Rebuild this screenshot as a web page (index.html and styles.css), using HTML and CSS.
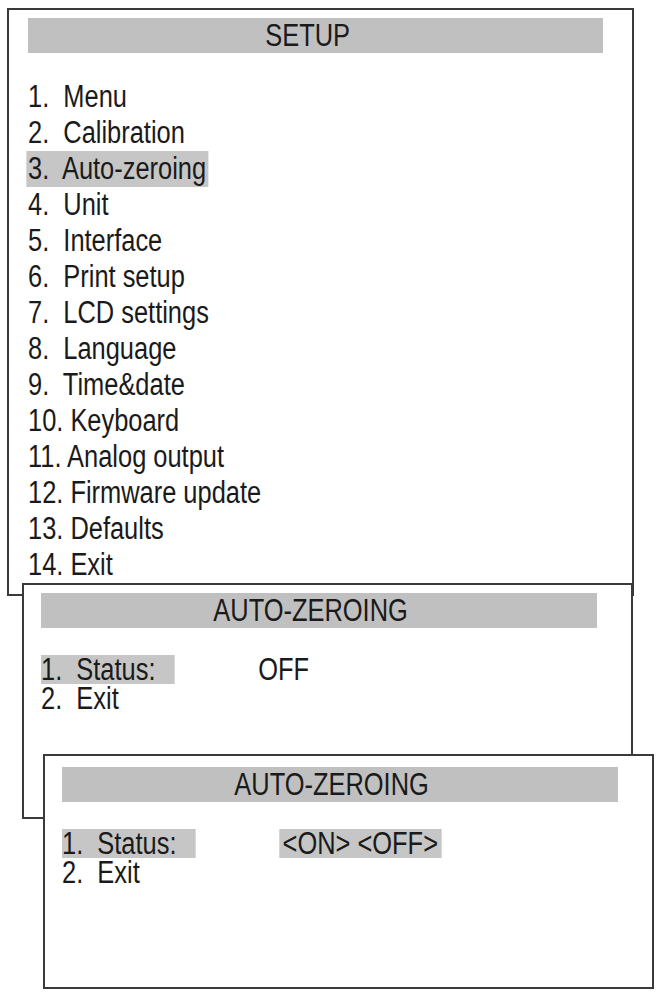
FILE: index.html
```html
<!DOCTYPE html>
<html lang="en">
<head>
<meta charset="utf-8">
<title>Setup menu – Auto-zeroing</title>
<link rel="stylesheet" href="styles.css">
</head>
<body>
<main class="stack">
  <section class="win win-setup">
    <h1 class="bar"><span class="cap">SETUP</span></h1>
    <ul class="menu">
      <li><span class="row">1.&nbsp; Menu</span></li>
      <li><span class="row">2.&nbsp; Calibration</span></li>
      <li><span class="row sel">3.&nbsp; Auto-zeroing</span></li>
      <li><span class="row">4.&nbsp; Unit</span></li>
      <li><span class="row">5.&nbsp; Interface</span></li>
      <li><span class="row">6.&nbsp; Print setup</span></li>
      <li><span class="row">7.&nbsp; LCD settings</span></li>
      <li><span class="row">8.&nbsp; Language</span></li>
      <li><span class="row">9.&nbsp; Time&amp;date</span></li>
      <li><span class="row">10. Keyboard</span></li>
      <li><span class="row">11. Analog output</span></li>
      <li><span class="row">12. Firmware update</span></li>
      <li><span class="row">13. Defaults</span></li>
      <li><span class="row">14. Exit</span></li>
    </ul>
  </section>

  <section class="win win-sub win-view">
    <h2 class="bar"><span class="cap">AUTO-ZEROING</span></h2>
    <div class="opts">
      <span class="label sel">1.&nbsp; Status:</span><span class="value">OFF</span>
      <span class="label">2.&nbsp; Exit</span><span class="value"></span>
    </div>
  </section>

  <section class="win win-sub win-edit">
    <h2 class="bar"><span class="cap">AUTO-ZEROING</span></h2>
    <div class="opts">
      <span class="label sel">1.&nbsp; Status:</span><span class="value"><span class="choice sel">&lt;ON&gt; &lt;OFF&gt;</span></span>
      <span class="label">2.&nbsp; Exit</span><span class="value"></span>
    </div>
  </section>
</main>
</body>
</html>
```

FILE: styles.css
```css
html, body {
  margin: 0;
  padding: 0;
  background: #ffffff;
}

body {
  font-family: "Liberation Sans", Arial, sans-serif;
  font-size: 31px;
  color: #1a1a1a;
}

.stack {
  display: flex;
  flex-direction: column;
  align-items: flex-start;
  padding-top: 8px;
}

/* each window paints over the one before it */
.win {
  position: relative;
  box-sizing: border-box;
  background: #ffffff;
  border: 2px solid #3a3a3a;
}

/* grey heading strip; the panel font is a narrow sans */
.bar {
  box-sizing: border-box;
  margin: 0;
  padding-right: 16px;
  background: #c0c0c0;
  font-size: 31px;
  font-weight: normal;
  text-align: center;
  line-height: 35px;
  height: 35px;
}

.cap {
  display: inline-block;
  transform: scaleX(0.82);
  transform-origin: center;
}

/* main setup window */
.win-setup {
  margin-left: 7px;
  width: 627px;
  height: 588px;
  padding: 8px 29px 0 19px;
}

.menu {
  list-style: none;
  margin: 26px 0 0;
  padding: 0;
  transform: scaleX(0.82);
  transform-origin: left top;
}

.menu li {
  height: 36px;
  line-height: 36px;
}

.row {
  display: inline-block;
  white-space: pre;
  margin-left: -2px;
  padding: 0 3px 0 2px;
}

.sel {
  background: #c6c6c6;
}

/* auto-zeroing sub windows */
.win-sub {
  width: 611px;
  padding: 8px 34px 0 17px;
}

.win-view {
  margin-left: 22px;
  margin-top: -13px;
  height: 236px;
}

.win-edit {
  margin-left: 43px;
  margin-top: -65px;
  height: 235px;
  padding-top: 11px;
}

.opts {
  display: grid;
  grid-template-columns: 265px auto;
  grid-auto-rows: 29px;
  align-items: center;
  width: 540px;
  margin-top: 27px;
  line-height: 29px;
  transform: scaleX(0.82);
  transform-origin: left top;
}

.label {
  width: 163px;
  height: 29px;
  white-space: pre;
}

.value {
  white-space: pre;
}

.choice {
  display: inline-block;
  margin-left: 0;
  padding: 0 4px;
}
```
